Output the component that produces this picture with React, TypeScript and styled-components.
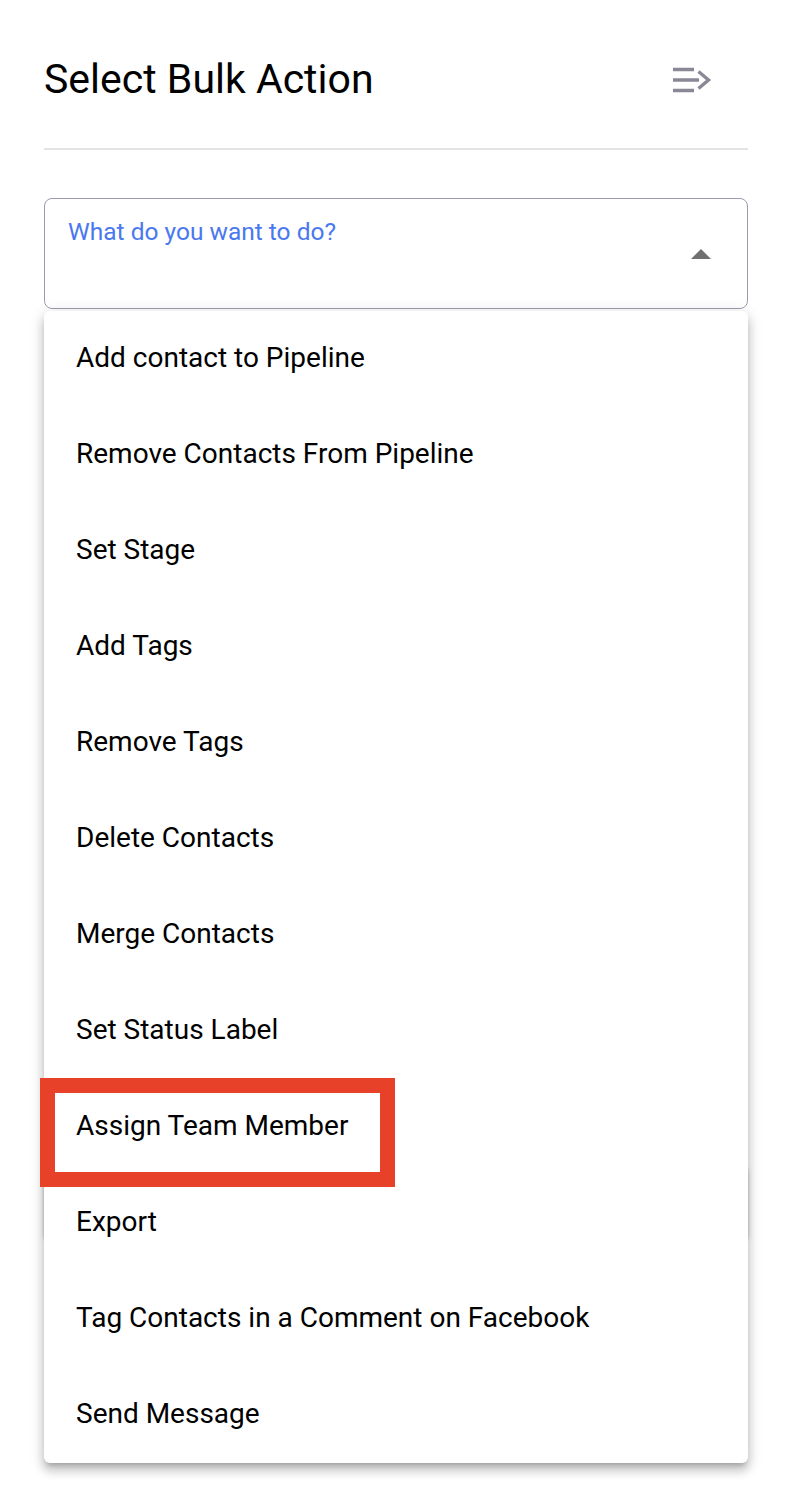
import styled, { createGlobalStyle } from "styled-components";

const GlobalStyle = createGlobalStyle`
  * {
    box-sizing: border-box;
  }
  body {
    margin: 0;
    background: #ffffff;
    font-family: Roboto, "Noto Sans", Arial, sans-serif;
    color: #000000;
  }
`;

const Page = styled.div`
  position: relative;
  width: 796px;
  min-height: 1492px;
  padding: 0 48px 0 44px;
`;

const Header = styled.header`
  display: flex;
  align-items: center;
  justify-content: space-between;
  padding-top: 56px;
  padding-bottom: 45px;
  border-bottom: 2px solid #e3e3e3;
`;

const Title = styled.h1`
  margin: 0;
  font-size: 41px;
  line-height: 47px;
  font-weight: 400;
`;

const IconButton = styled.button`
  display: flex;
  align-items: center;
  justify-content: center;
  margin-right: 36px;
  padding: 0;
  border: none;
  background: none;
  color: #8a8797;
  cursor: pointer;
`;

const Field = styled.div`
  position: relative;
  margin-top: 48px;
`;

const SelectBox = styled.div`
  display: flex;
  align-items: center;
  justify-content: space-between;
  height: 111px;
  padding: 0 36px 0 23px;
  border: 1.5px solid #9d9cb0;
  border-radius: 8px;
`;

const Label = styled.span`
  align-self: flex-start;
  margin-top: 18px;
  font-size: 24.5px;
  line-height: 29px;
  color: #4a78ef;
`;

const Caret = styled.span`
  width: 0;
  height: 0;
  border-left: 10px solid transparent;
  border-right: 10px solid transparent;
  border-bottom: 10px solid #707070;
  margin-top: 1px;
`;

const Menu = styled.ul`
  position: absolute;
  top: 113px;
  left: 0;
  right: 0;
  z-index: 2;
  margin: 0;
  padding: 0;
  list-style: none;
  background: #ffffff;
  border-radius: 6px;
  box-shadow: 0 5px 5px -3px rgba(0, 0, 0, 0.2),
    0 8px 10px 1px rgba(0, 0, 0, 0.14), 0 3px 14px 2px rgba(0, 0, 0, 0.12);
`;

const MenuItem = styled.li`
  position: relative;
  display: flex;
  align-items: center;
  height: 96px;
  padding: 0 0 3px 32px;
  font-size: 28px;
  line-height: 33px;
  cursor: pointer;
`;

const Highlight = styled.span`
  position: absolute;
  top: -1px;
  left: -4px;
  width: 355px;
  height: 109px;
  border: 15px solid #e8412a;
  pointer-events: none;
`;

const ActionPanel = styled.div`
  height: 74px;
  margin-top: 857px;
  border-radius: 6px;
  background: #ffffff;
  box-shadow: 0 1px 4px rgba(0, 0, 0, 0.25);
`;

const actions = [
  "Add contact to Pipeline",
  "Remove Contacts From Pipeline",
  "Set Stage",
  "Add Tags",
  "Remove Tags",
  "Delete Contacts",
  "Merge Contacts",
  "Set Status Label",
  "Assign Team Member",
  "Export",
  "Tag Contacts in a Comment on Facebook",
  "Send Message",
];

const CollapseIcon = () => (
  <svg width="40" height="28" viewBox="0 0 40 28" fill="none">
    <path
      d="M1 3.5h21M1 14h26M1 24.5h21"
      stroke="currentColor"
      strokeWidth="3.4"
    />
    <path
      d="M26.5 5.5l10 8.5-10 8.5"
      stroke="currentColor"
      strokeWidth="3.4"
      strokeLinejoin="miter"
    />
  </svg>
);

const App = () => {
  return (
    <Page>
      <GlobalStyle />
      <Header>
        <Title>Select Bulk Action</Title>
        <IconButton aria-label="Collapse">
          <CollapseIcon />
        </IconButton>
      </Header>
      <Field>
        <SelectBox>
          <Label>What do you want to do?</Label>
          <Caret />
        </SelectBox>
        <Menu>
          {actions.map((action) => (
            <MenuItem key={action}>
              {action}
              {action === "Assign Team Member" && <Highlight />}
            </MenuItem>
          ))}
        </Menu>
      </Field>
      <ActionPanel />
    </Page>
  );
};

export default App;
